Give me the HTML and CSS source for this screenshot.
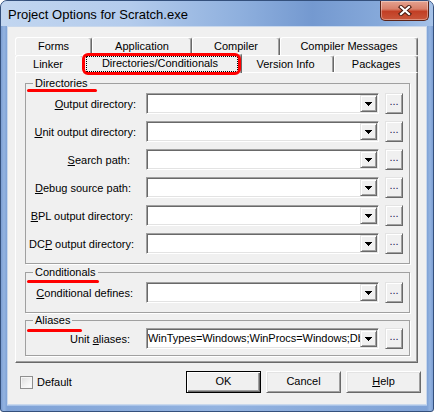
FILE: index.html
```html
<!DOCTYPE html>
<html lang="en">
<head>
<meta charset="utf-8">
<title>Project Options for Scratch.exe</title>
<link rel="stylesheet" href="styles.css">
</head>
<body>
<div class="window">
  <div class="titlebar">
    <span class="title">Project Options for Scratch.exe</span>
    <div class="close" aria-label="Close">
      <svg width="14" height="11" viewBox="0 0 14 11">
        <path d="M3 2L11 9M11 2L3 9" stroke="#4a1a10" stroke-width="4.2" stroke-linecap="square" fill="none"/>
        <path d="M3 2L11 9M11 2L3 9" stroke="#fff" stroke-width="2.2" stroke-linecap="square" fill="none"/>
      </svg>
    </div>
  </div>
  <div class="client">
    <div class="tabctl">
      <div class="tabrow">
        <div class="tab t-forms">Forms</div>
        <div class="tab t-app">Application</div>
        <div class="tab t-comp">Compiler</div>
        <div class="tab t-msgs">Compiler Messages</div>
      </div>
      <div class="tabrow row2">
        <div class="tab t-linker">Linker</div>
        <div class="tab sel t-dirs"><span class="focus">Directories/Conditionals</span></div>
        <div class="tab t-ver">Version Info</div>
        <div class="tab t-pkg">Packages</div>
      </div>
      <div class="mark-tab"></div>
      <div class="panel">
        <fieldset class="group g-dirs">
          <legend class="cap cap-dirs">Directories</legend>
          <div class="row">
            <span class="lbl"><u>O</u>utput directory:</span>
            <div class="combo"><span class="val"></span><span class="drop"><svg width="7" height="4" viewBox="0 0 7 4"><path d="M0 0H7V1H6V2H5V3H4V4H3V3H2V2H1V1H0Z"/></svg></span></div>
            <span class="dots">...</span>
          </div>
          <div class="row">
            <span class="lbl"><u>U</u>nit output directory:</span>
            <div class="combo"><span class="val"></span><span class="drop"><svg width="7" height="4" viewBox="0 0 7 4"><path d="M0 0H7V1H6V2H5V3H4V4H3V3H2V2H1V1H0Z"/></svg></span></div>
            <span class="dots">...</span>
          </div>
          <div class="row">
            <span class="lbl lbl-search"><u>S</u>earch path:</span>
            <div class="combo"><span class="val"></span><span class="drop"><svg width="7" height="4" viewBox="0 0 7 4"><path d="M0 0H7V1H6V2H5V3H4V4H3V3H2V2H1V1H0Z"/></svg></span></div>
            <span class="dots">...</span>
          </div>
          <div class="row">
            <span class="lbl lbl-debug"><u>D</u>ebug source path:</span>
            <div class="combo"><span class="val"></span><span class="drop"><svg width="7" height="4" viewBox="0 0 7 4"><path d="M0 0H7V1H6V2H5V3H4V4H3V3H2V2H1V1H0Z"/></svg></span></div>
            <span class="dots">...</span>
          </div>
          <div class="row">
            <span class="lbl lbl-bpl"><u>B</u>PL output directory:</span>
            <div class="combo"><span class="val"></span><span class="drop"><svg width="7" height="4" viewBox="0 0 7 4"><path d="M0 0H7V1H6V2H5V3H4V4H3V3H2V2H1V1H0Z"/></svg></span></div>
            <span class="dots">...</span>
          </div>
          <div class="row">
            <span class="lbl lbl-dcp">DC<u>P</u> output directory:</span>
            <div class="combo"><span class="val"></span><span class="drop"><svg width="7" height="4" viewBox="0 0 7 4"><path d="M0 0H7V1H6V2H5V3H4V4H3V3H2V2H1V1H0Z"/></svg></span></div>
            <span class="dots">...</span>
          </div>
        </fieldset>
        <fieldset class="group g-cond">
          <legend class="cap cap-cond">Conditionals</legend>
          <div class="row">
            <span class="lbl lbl-cond"><u>C</u>onditional defines:</span>
            <div class="combo"><span class="val"></span><span class="drop"><svg width="7" height="4" viewBox="0 0 7 4"><path d="M0 0H7V1H6V2H5V3H4V4H3V3H2V2H1V1H0Z"/></svg></span></div>
            <span class="dots">...</span>
          </div>
        </fieldset>
        <fieldset class="group g-alias">
          <legend class="cap cap-alias">Aliases</legend>
          <div class="row">
            <span class="lbl lbl-alias">Unit <u>a</u>liases:</span>
            <div class="combo"><span class="val">WinTypes=Windows;WinProcs=Windows;Db</span><span class="drop"><svg width="7" height="4" viewBox="0 0 7 4"><path d="M0 0H7V1H6V2H5V3H4V4H3V3H2V2H1V1H0Z"/></svg></span></div>
            <span class="dots">...</span>
          </div>
        </fieldset>
      </div>
    </div>
    <div class="footer">
      <label class="chk"><span class="box"></span><span>Default</span></label>
      <div class="buttons">
        <span class="pbtn def">OK</span>
        <span class="pbtn">Cancel</span>
        <span class="pbtn"><u>H</u>elp</span>
      </div>
    </div>
  </div>
</div>
</body>
</html>
```
FILE: styles.css
```css
* { box-sizing: border-box; }
html, body { margin: 0; padding: 0; background: #fff; }
body {
  font-family: "Liberation Sans", Arial, sans-serif;
  font-size: 11px;
  color: #000;
}
u { text-decoration: underline; text-underline-offset: 1px; }

.window {
  width: 434px;
  height: 412px;
  border: 1px solid #34507c;
  border-radius: 7px 7px 3px 3px;
  background: linear-gradient(90deg, #7d9fd3 0px, #93b3e0 3px, #7fa2d6 6px, #93b3e0 50%, #7fa2d6 calc(100% - 6px), #93b3e0 calc(100% - 3px), #7d9fd3 100%);
  display: flex;
  flex-direction: column;
  overflow: hidden;
}
.titlebar {
  height: 25px;
  flex: none;
  display: flex;
  align-items: flex-start;
  padding-left: 7px;
  background: linear-gradient(90deg, #c2d6f0 0%, #b3cbec 30%, #8fb0de 55%, #7499d0 72%, #86a9da 88%, #a6c2e8 100%);
}
.title {
  margin-top: 6px;
  font-size: 13px;
  line-height: 15px;
}
.close {
  margin-left: auto;
  margin-right: 4px;
  width: 49px;
  height: 20px;
  border: 1px solid #5b2317;
  border-top: none;
  border-radius: 0 0 5px 5px;
  background: linear-gradient(180deg, #e5a290 0%, #d9806a 42%, #c23f25 55%, #c9563a 100%);
  box-shadow: inset 0 0 0 1px rgba(255, 255, 255, 0.35);
  display: flex;
  align-items: center;
  justify-content: center;
}

.client {
  flex: 1;
  margin: 0 6px 6px;
  border: 1px solid #c9d8ec;
  background: #f0f0f0;
  display: flex;
  flex-direction: column;
  box-shadow: 0 1px 0 #a9c3e8;
}

/* tab control */
.tabctl {
  margin: 10px 8px 0 7px;
  position: relative;
}
.tabrow { display: flex; height: 18px; }
.tabrow.row2 { height: 17px; }
.tab {
  flex: none;
  height: 100%;
  background: #f0f0f0;
  border-top: 1px solid #fff;
  border-left: 1px solid #fff;
  border-right: 1px solid #696969;
  box-shadow: inset -1px 0 #a0a0a0;
  border-radius: 3px 3px 0 0;
  text-align: center;
  line-height: 17px;
  white-space: nowrap;
}
.row2 .tab { line-height: 16px; padding-right: 3px; }
.t-forms { width: 77px; }
.t-app { width: 100px; }
.t-comp { width: 88px; }
.t-msgs { width: 138px; }
.t-linker { width: 69px; }
.t-dirs { width: 160px; }
.t-ver { width: 94px; }
.t-pkg { width: 84px; }
.row2 .t-pkg { padding-right: 0; }
.tab.sel {
  height: 20px;
  margin: -2px -2px 0;
  align-self: flex-start;
  position: relative;
  z-index: 1;
  padding: 2px 3px 0 3px;
}
.focus {
  display: block;
  height: 16px;
  border: 1px dotted #000;
  line-height: 13px;
  padding-right: 4px;
}
.mark-tab {
  position: absolute;
  left: 67px;
  top: 16px;
  width: 159px;
  height: 22px;
  border: 3px solid #ff0000;
  border-radius: 6px;
  z-index: 2;
}

.panel {
  height: 291px;
  background: #f0f0f0;
  border-top: 1px solid #fff;
  border-left: 1px solid #fff;
  border-right: 1px solid #696969;
  border-bottom: 1px solid #696969;
  box-shadow: inset -1px -1px #a0a0a0;
  padding: 4px 7px 0 9px;
}

/* group boxes */
.group {
  margin: 0;
  min-width: 0;
  border: 1px solid #a0a0a0;
  box-shadow: 1px 1px 0 #fff;
  padding: 3px 5px 9px 0;
}
.g-cond { margin-top: 2px; }
.g-alias { margin-top: 1px; padding-top: 1px; padding-bottom: 6px; }
.cap {
  position: relative;
  margin-left: 7px;
  padding: 0 2px;
  line-height: 13px;
}
.cap::after {
  content: "";
  position: absolute;
  left: -6px;
  height: 3px;
  background: #ff0000;
  border-radius: 2px;
}
.cap-dirs::after { top: 12px; width: 70px; }
.cap-cond::after { top: 14px; width: 72px; }
.cap-alias::after { top: 15px; width: 55px; }

.row {
  display: flex;
  align-items: center;
  height: 21px;
}
.row + .row { margin-top: 7px; }
.lbl {
  flex: none;
  width: 120px;
  padding-right: 10px;
  text-align: right;
  white-space: nowrap;
}
.lbl-search { padding-right: 16px; }
.lbl-debug { padding-right: 15px; }
.lbl-bpl { padding-right: 13px; }
.lbl-dcp { padding-right: 12px; }
.lbl-cond { padding-right: 13px; }
.lbl-alias { padding-right: 16px; }

.combo {
  flex: none;
  width: 233px;
  height: 21px;
  display: flex;
  background: #fff;
  border: 1px solid;
  border-color: #a0a0a0 #fff #fff #a0a0a0;
  padding: 1px;
  box-shadow: inset 1px 1px #696969, inset -1px -1px #e3e3e3;
}
.val {
  flex: 1;
  min-width: 0;
  overflow: hidden;
  white-space: nowrap;
  line-height: 17px;
  letter-spacing: -0.05px;
}
.drop {
  flex: none;
  width: 17px;
  height: 17px;
  background: #f0f0f0;
  border: 1px solid;
  border-color: #e3e3e3 #696969 #696969 #e3e3e3;
  box-shadow: inset 1px 1px #fff, inset -1px -1px #a0a0a0;
  display: flex;
  align-items: center;
  justify-content: center;
}
.drop svg { display: block; }
.dots {
  flex: none;
  width: 18px;
  height: 21px;
  margin-left: 6px;
  background: #f0f0f0;
  border: 1px solid;
  border-color: #e3e3e3 #696969 #696969 #e3e3e3;
  box-shadow: inset 1px 1px #fff, inset -1px -1px #a0a0a0;
  text-align: center;
  line-height: 15px;
  color: #1a1a50;
}

/* footer */
.footer {
  display: flex;
  align-items: center;
  height: 22px;
  margin-top: 8px;
}
.chk {
  display: flex;
  align-items: center;
  gap: 4px;
  margin-left: 12px;
}
.box {
  width: 13px;
  height: 13px;
  border: 1px solid #8f8f8f;
  background: linear-gradient(135deg, #dcdcdc 0%, #f4f4f4 60%, #fff 100%);
  box-shadow: inset 0 0 0 1px #f6f6f6;
}
.buttons {
  margin-left: auto;
  margin-right: 5px;
  display: flex;
  gap: 5px;
}
.pbtn {
  width: 75px;
  height: 22px;
  background: #f0f0f0;
  border: 1px solid;
  border-color: #fff #696969 #696969 #fff;
  box-shadow: inset 1px 1px #e3e3e3, inset -1px -1px #a0a0a0;
  text-align: center;
  line-height: 19px;
}
.pbtn.def {
  border: 1px solid #000;
  box-shadow: inset 1px 1px #fff, inset -1px -1px #696969, inset -2px -2px #a0a0a0;
}
```
